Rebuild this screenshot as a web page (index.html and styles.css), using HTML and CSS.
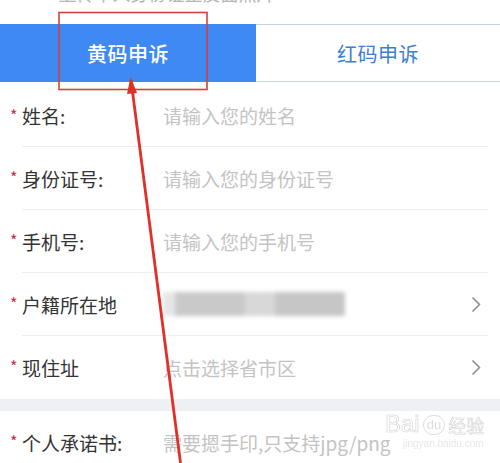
FILE: index.html
```html
<!DOCTYPE html>
<html lang="zh">
<head>
<meta charset="utf-8">
<link rel="stylesheet" href="styles.css">
</head>
<body>
<div class="page">
  <div class="topstrip"><span class="topmark">*</span><span class="toptext">上传本人身份证正反面照片</span></div>
  <div class="tabs">
    <div class="tab tab-active">黄码申诉</div>
    <div class="tab tab-idle">红码申诉</div>
  </div>
  <div class="form">
    <div class="row row-first">
      <span class="star">*</span>
      <div class="content"><span class="label">姓名:</span><span class="ph">请输入您的姓名</span></div>
    </div>
    <div class="row">
      <span class="star">*</span>
      <div class="content"><span class="label">身份证号:</span><span class="ph">请输入您的身份证号</span></div>
    </div>
    <div class="row">
      <span class="star">*</span>
      <div class="content"><span class="label">手机号:</span><span class="ph">请输入您的手机号</span></div>
    </div>
    <div class="row">
      <span class="star">*</span>
      <div class="content"><span class="label">户籍所在地</span><span class="blur"><span class="b1"></span><span class="b2"></span><span class="b3"></span><span class="b4"></span></span><svg class="chev" width="10" height="17" viewBox="0 0 10 17"><path d="M1.5 1.5 L8.5 8.5 L1.5 15.5" fill="none" stroke="#8a8a8a" stroke-width="1.5"/></svg></div>
    </div>
    <div class="row row-last">
      <span class="star">*</span>
      <div class="content"><span class="label">现住址</span><span class="ph">点击选择省市区</span><svg class="chev" width="10" height="17" viewBox="0 0 10 17"><path d="M1.5 1.5 L8.5 8.5 L1.5 15.5" fill="none" stroke="#8a8a8a" stroke-width="1.5"/></svg></div>
    </div>
    <div class="band"></div>
    <div class="row row-last">
      <span class="star">*</span>
      <div class="content"><span class="label">个人承诺书:</span><span class="ph">需要摁手印,只支持jpg/png</span></div>
    </div>
  </div>
  <div class="watermark"><div class="wm-logo"><span class="wm-bai">Bai</span><span class="wm-du">du</span><span class="wm-jy">经验</span></div><div class="wm-url">jingyan.baidu.com</div></div>
  <svg class="annot" width="500" height="463" viewBox="0 0 500 463">
    <rect x="59" y="12.5" width="148" height="77" fill="none" stroke="#d6403a" stroke-width="1.6"/>
    <path d="M131 80 L180.5 463" stroke="#e0302a" stroke-width="2.8" fill="none"/>
    <path d="M127 94 L130.5 77 L137 93 Z" fill="#e0302a"/>
  </svg>
</div>
</body>
</html>
```
FILE: styles.css
```css
* { box-sizing: border-box; }
html, body { margin: 0; padding: 0; background: #fff; }
body {
  font-family: "Noto Sans CJK SC", "Noto Sans", sans-serif;
  width: 500px;
  height: 463px;
  overflow: hidden;
}
.page { position: relative; width: 500px; height: 463px; overflow: hidden; }

.topstrip {
  height: 24px;
  overflow: hidden;
  display: flex;
  align-items: flex-end;
  color: #9a9a9a;
  font-size: 18px;
  line-height: 18px;
}
.topmark { margin-left: 32px; margin-bottom: 18px; color: #777; }
.toptext { margin-left: 18px; margin-bottom: 22px; color: #b4b4b4; }

.tabs { display: flex; height: 58px; }
.tab {
  display: flex;
  align-items: center;
  justify-content: center;
  font-size: 20px;
  letter-spacing: 0.5px;
}
.tab-active { width: 256px; background: #3e89f4; color: #fff; font-weight: 500; }
.tab-idle {
  flex: 1;
  color: #3b7fd3;
  border-top: 1px solid #c9d3de;
  border-bottom: 1px solid #c9d3de;
}

.form { display: flex; flex-direction: column; }
.row { display: flex; align-items: stretch; height: 63px; }
.row-first { height: 65px; padding-top: 3px; }
.star {
  width: 12px;
  margin-left: 10px;
  color: #c42f4c;
  font-size: 16px;
  display: flex;
  align-items: center;
  padding-bottom: 3px;
}
.content {
  flex: 1;
  margin-right: 12px;
  display: flex;
  align-items: center;
  border-bottom: 1px solid #eeeeee;
  font-size: 19px;
}
.row-last .content { border-bottom: none; }
.label { width: 141px; color: #333333; }
.ph { color: #c3c3c3; flex: 1; }
.chev { margin-right: 7px; }

.blur {
  flex: 1;
  display: flex;
  height: 24px;
  filter: blur(2px);
}
.blur span { display: block; height: 100%; }
.b1 { width: 12px; background: #e6e6e6; }
.b2 { width: 70px; background: #c9c9c9; }
.b3 { width: 30px; background: #d8d8d8; }
.b4 { width: 70px; background: #c6c6c6; margin-right: 120px; }

.band { height: 12px; background: #eef0f3; }

.watermark {
  position: absolute;
  left: 385px;
  top: 412px;
  opacity: 0.8;
}
.wm-logo { display: flex; align-items: flex-end; font-family: "Liberation Sans", sans-serif; font-size: 24px; line-height: 24px; }
.wm-bai { color: transparent; -webkit-text-stroke: 0.6px #c8c8c8; }
.wm-du {
  font-size: 13px;
  line-height: 14px;
  border: 1px solid #d4d4d4;
  border-radius: 10px;
  padding: 2px 3px;
  margin: 0 3px 1px;
  color: #d4d4d4;
}
.wm-jy { font-family: "Noto Sans CJK SC", sans-serif; font-size: 18px; line-height: 22px; color: transparent; -webkit-text-stroke: 0.6px #c8c8c8; }
.wm-url { font-family: "Liberation Sans", sans-serif; font-size: 10px; color: #e2e2e2; margin-left: 18px; margin-top: 2px; }

.annot { position: absolute; left: 0; top: 0; pointer-events: none; }
```
